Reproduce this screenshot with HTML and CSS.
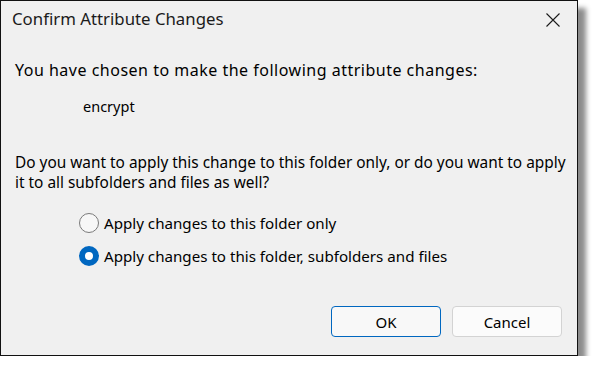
FILE: index.html
```html
<!DOCTYPE html>
<html>
<head>
<meta charset="utf-8">
<link rel="stylesheet" href="styles.css">
</head>
<body>
<div class="dialog">
  <div class="titlebar">
    <span class="title">Confirm Attribute Changes</span>
    <svg class="close" width="14" height="14" viewBox="0 0 14 14"><path d="M0.5 0.5 L13.5 13.5 M13.5 0.5 L0.5 13.5" stroke="#1a1a1a" stroke-width="1.1" fill="none"/></svg>
  </div>
  <div class="content">
    <p class="line intro">You have chosen to make the following attribute changes:</p>
    <p class="line attr">encrypt</p>
    <p class="line question">Do you want to apply this change to this folder only, or do you want to apply<br>it to all subfolders and files as well?</p>
    <div class="options">
      <div class="option"><span class="radio"></span><span>Apply changes to this folder only</span></div>
      <div class="option"><span class="radio checked"></span><span>Apply changes to this folder, subfolders and files</span></div>
    </div>
    <div class="buttons">
      <button class="btn primary">OK</button>
      <button class="btn">Cancel</button>
    </div>
  </div>
</div>
</body>
</html>
```
FILE: styles.css
```css
html, body {
  margin: 0;
  padding: 0;
  background: #ffffff;
}
body {
  font-family: "Noto Sans", "Open Sans", sans-serif;
  font-size: 15px;
  color: #000;
}
.dialog {
  width: 576px;
  height: 354px;
  border: 1px solid #111;
  background: #f0f0f0;
  box-shadow: 8px 8px 5px rgba(0, 0, 0, 0.45);
  display: flex;
  flex-direction: column;
}
.titlebar {
  display: flex;
  justify-content: space-between;
  align-items: flex-start;
  padding: 8px 17px 0 11px;
  height: 38px;
  box-sizing: border-box;
}
.title {
  font-size: 16.8px;
  line-height: 20px;
  color: #1b1b1b;
}
.close {
  margin-top: 4px;
}
.content {
  padding: 0 14px;
  display: flex;
  flex-direction: column;
}
.line {
  margin: 0;
  line-height: 20px;
  white-space: nowrap;
}
.intro {
  margin-top: 21px;
  font-size: 16px;
  letter-spacing: 0.5px;
}
.attr {
  margin-top: 16px;
  padding-left: 68px;
  font-size: 14.5px;
}
.question {
  margin-top: 37px;
  font-size: 15.4px;
}
.options {
  margin-top: 20px;
  display: flex;
  flex-direction: column;
  gap: 13px;
  padding-left: 64px;
  font-size: 15.15px;
}
.option {
  display: flex;
  align-items: center;
  gap: 5px;
  height: 20px;
  line-height: 20px;
}
.radio {
  width: 20px;
  height: 20px;
  box-sizing: border-box;
  border: 1px solid #7a7a7a;
  border-radius: 50%;
  background: #f7f7f7;
  flex: none;
}
.radio.checked {
  border: 6px solid #0067c0;
  background: #ffffff;
}
.buttons {
  margin-top: 40px;
  display: flex;
  justify-content: flex-end;
  gap: 11px;
  padding-right: 1px;
}
.btn {
  width: 110px;
  height: 31px;
  border: 1px solid #d3d3d3;
  border-radius: 4px;
  background: #fbfbfb;
  font-family: inherit;
  font-size: 15px;
  color: #000;
  padding: 0;
}
.btn.primary {
  border-color: #0067c0;
  background: #f8f8f8;
}
```
